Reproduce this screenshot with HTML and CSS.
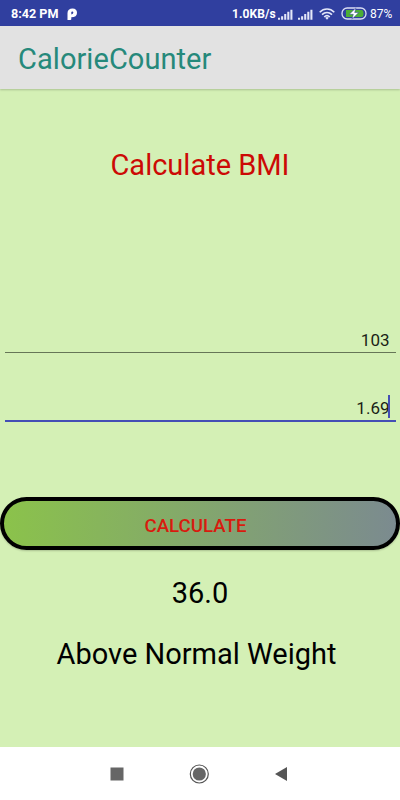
FILE: index.html
```html
<!DOCTYPE html>
<html lang="en">
<head>
    <meta charset="UTF-8">
    <meta name="viewport" content="width=device-width, initial-scale=1.0">
    <title>CalorieCounter</title>
    <link rel="stylesheet" href="styles.css">
</head>
<body>
    <div class="status-bar">
        <span class="time">8:42 PM</span>
        <svg class="parking" width="11" height="13" viewBox="0 0 11 13">
            <path d="M.5 12V5C.5 2 2.500.5 5.500.5C8.500.5 10 2.300 10 4.700C10 7.600 8 9.300 4.300 9.300V11Q4.300 12 3.300 12z" fill="#fff"/>
            <path d="M4.300 6.500V4.500Q4.300 3.500 5.300 3.500T6.300 4.800T4.300 6.500z" fill="#303f9f"/>
        </svg>
        <span class="speed">1.0KB/s</span>
        <svg class="signal" width="15" height="12" viewBox="0 0 16 12">
            <path d="M0 10h2.200V12H0zM3.300 8.500h2.200V12H3.300zM6.600 6h2.200v6H6.600zM9.900 3.500h2.200V12H9.900zM13.200 1.500h2.200V12h-2.200z" fill="#e4e7f8"/>
        </svg>
        <svg class="signal second" width="15" height="12" viewBox="0 0 16 12">
            <path d="M0 10h2.200V12H0zM3.300 8.500h2.200V12H3.300zM6.600 6h2.200v6H6.600zM9.900 3.500h2.200V12H9.900zM13.200 1.500h2.200V12h-2.200z" fill="#e4e7f8"/>
        </svg>
        <svg class="wifi" width="16" height="12" viewBox="0 0 16 12">
            <g fill="none" stroke="#e4e7f8" stroke-width="1.6">
                <path d="M.7 4.2C5-.1 11-.1 15.3 4.2"/>
                <path d="M3 6.7c3-2.9 7-2.9 10 0"/>
                <path d="M5.2 9c1.7-1.6 3.9-1.6 5.6 0"/>
            </g>
            <path d="M6.2 9.7Q8 8.5 9.8 9.7L8 11.8z" fill="#e4e7f8"/>
        </svg>
        <svg class="battery" width="26" height="13" viewBox="0 0 26 13">
            <rect x="1" y="1" width="24" height="11" rx="5.2" fill="none" stroke="#dce0f5" stroke-width="1.3"/>
            <path d="M5 3h15.500Q22.500 3 22.500 6.500T20.500 10H5z" fill="#4cae35"/>
            <path d="M15 .8L8.300 7.300h4L11 12.200l6.700-6.700h-4z" fill="#fff" stroke="#303f9f" stroke-width=".5"/>
        </svg>
        <span class="percent">87%</span>
    </div>

    <div class="app-bar">
        <h1>CalorieCounter</h1>
    </div>

    <div class="content">
        <h2>Calculate BMI</h2>
        <div class="field">103</div>
        <div class="field focused">1.69<span class="cursor"></span></div>
        <button class="calculate">CALCULATE</button>
        <p class="result">36.0</p>
        <p class="message">Above Normal Weight</p>
    </div>

    <div class="nav-bar">
        <svg width="20" height="20" viewBox="0 0 20 20">
            <rect x="3.500" y="3.500" width="13" height="13" fill="#666"/>
        </svg>
        <svg width="20" height="20" viewBox="0 0 20 20">
            <circle cx="10.300" cy="10" r="9" fill="none" stroke="#555" stroke-width="1.200"/>
            <circle cx="10.300" cy="10" r="6.600" fill="#666"/>
        </svg>
        <svg width="20" height="20" viewBox="0 0 20 20">
            <path d="M4 10L16 3v14z" fill="#555"/>
        </svg>
    </div>
</body>
</html>
```

FILE: styles.css
```css
/* General styles */
* {
    box-sizing: border-box;
}
body {
    font-family: Roboto, sans-serif;
    margin: 0;
    height: 800px;
    display: flex;
    flex-direction: column;
    overflow: hidden;
    background-color: #fff;
}
h1, h2, p {
    margin: 0;
    font-weight: 400;
    font-size: 29px;
    line-height: 34px;
    white-space: nowrap;
}

/* Status bar */
.status-bar {
    height: 26px;
    flex-shrink: 0;
    display: flex;
    align-items: center;
    padding: 2px 8px 0 11px;
    background-color: #303f9f;
    color: #fff;
    font-size: 12px;
    line-height: 14px;
    white-space: nowrap;
}
.time, .speed {
    font-weight: 700;
}
.time {
    width: 48px;
    font-size: 12.6px;
}
.parking {
    margin-left: 8px;
}
.speed {
    margin-left: auto;
    width: 43px;
    letter-spacing: 0.1px;
}
.signal {
    margin-left: 3px;
    margin-top: -1px;
}
.second {
    margin-left: 5px;
}
.wifi {
    margin-left: 6px;
    margin-top: -1px;
}
.battery {
    margin-left: 6px;
    margin-top: -1px;
}
.percent {
    margin-left: 3px;
    width: 22px;
}

/* App bar */
.app-bar {
    height: 63px;
    flex-shrink: 0;
    padding: 16px 18px 0;
    background-color: #e2e2e2;
    box-shadow: 0 1px 2px rgba(0, 0, 0, 0.2);
    z-index: 1;
}
.app-bar h1 {
    color: #26897b;
    letter-spacing: 0.06px;
}

/* Form */
.content {
    height: 658px;
    flex-shrink: 0;
    padding-top: 59px;
    background-color: #d4f0b5;
    color: #000;
    text-align: center;
}
.content h2 {
    color: #cc0a05;
}
.field {
    height: 24px;
    margin: 147px 4px 0 5px;
    padding-right: 6.5px;
    border-bottom: 1px solid #667657;
    font-size: 17px;
    line-height: 22px;
    text-align: right;
    color: #1a1f16;
}
.field.focused {
    height: 27px;
    margin-top: 42px;
    border-bottom: 2px solid #444eb5;
    line-height: 26px;
}
.cursor {
    display: inline-block;
    width: 2px;
    height: 23px;
    margin-left: -2px;
    vertical-align: top;
    background-color: #444eb5;
}
.calculate {
    display: block;
    width: 400px;
    height: 53px;
    margin: 75px 0 0;
    padding: 4px 9px 0 0;
    border: 4px solid #000;
    border-radius: 27px;
    background: linear-gradient(to right, #8bc34a, #7b8a90) border-box;
    box-shadow: 0 1px 2px rgba(0, 0, 0, 0.2);
    color: #d81b0e;
    font-family: Roboto, sans-serif;
    font-size: 18.7px;
    font-weight: 500;
}
.result {
    margin-top: 26px;
}
.message {
    margin-top: 27px;
    padding-right: 7px;
}

/* Navigation bar */
.nav-bar {
    flex: 1;
    display: flex;
    align-items: center;
    justify-content: center;
    gap: 62px;
    padding-right: 1.4px;
    background-color: #fff;
}
```
